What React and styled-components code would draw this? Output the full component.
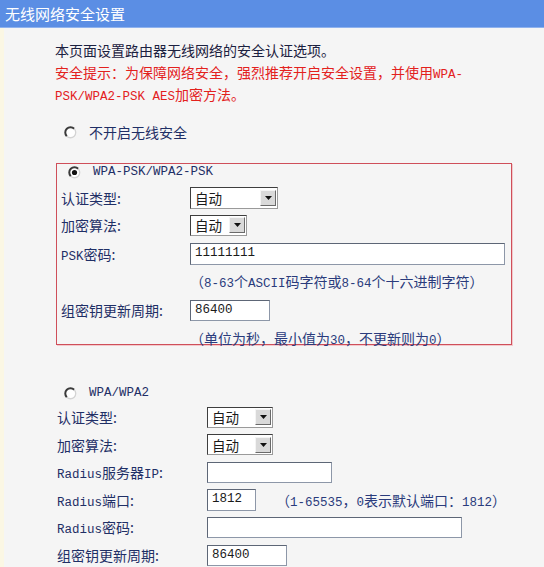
import React from "react";
import styled, { createGlobalStyle } from "styled-components";

// Global
const GlobalStyle = createGlobalStyle`
  html, body {
    margin: 0;
    padding: 0;
    background: #f5f5f5;
  }
  body {
    font-family: "Noto Sans CJK SC", "Liberation Sans", sans-serif;
    font-size: 14px;
  }
`;

// Styles
const Page = styled.div`
  width: 544px;
  height: 567px;
  overflow: hidden;
  background: #f5f5f5;
`;

const Header = styled.div`
  height: 27px;
  line-height: 27px;
  padding-left: 5px;
  background: #5b8ee4;
  border-bottom: 1px solid #8fb2ee;
  color: #ffffff;
  font-size: 15px;
`;

const Content = styled.div`
  padding: 11px 0 0 51px;
  border-left: 4px solid #fbf7e4;
  min-height: 540px;
`;

const Line = styled.div`
  height: 22px;
  line-height: 22px;
  color: ${(p) => (p.$warn ? "#e3211d" : "#1b2140")};
  white-space: nowrap;
`;

const Lat = styled.span`
  font-family: "Liberation Mono", monospace;
  font-size: 12.5px;
`;

const RadioRow = styled.label`
  display: flex;
  align-items: center;
  height: ${(p) => p.$h}px;
  margin-top: ${(p) => p.$top}px;
  padding-left: ${(p) => p.$indent}px;
  gap: 12px;
  color: #1f2f66;
`;

const Box = styled.div`
  width: 450px;
  margin-left: 1px;
  margin-top: 20px;
  padding-left: 4px;
  border: 1px solid #cf4f5a;
  box-shadow: 1px 1px 0 #f2c9cc;
`;

const Rows = styled.div`
  margin-top: ${(p) => p.$top || 0}px;
  margin-left: ${(p) => p.$left || 0}px;
`;

const Row = styled.div`
  display: grid;
  grid-template-columns: ${(p) => p.$label}px 1fr;
  align-items: center;
  height: ${(p) => p.$h}px;
  white-space: nowrap;
`;

const Label = styled.span`
  color: #1f2f66;
`;

const Field = styled.div`
  display: flex;
  align-items: center;
  gap: 20px;
`;

const Hint = styled.span`
  color: #2a3b7c;
`;

const Input = styled.div`
  box-sizing: border-box;
  width: ${(p) => p.$w}px;
  height: ${(p) => p.$ht || 21}px;
  padding-left: 4px;
  background: #ffffff;
  border: 1px solid #8d97a8;
  border-top-color: #5d6676;
  border-left-color: #5d6676;
  font-family: "Liberation Mono", monospace;
  font-size: 12.5px;
  line-height: 19px;
  color: #1a1a1a;
`;

const Select = styled.div`
  box-sizing: border-box;
  display: flex;
  align-items: center;
  justify-content: space-between;
  width: ${(p) => p.$w}px;
  height: ${(p) => p.$ht || 21}px;
  padding: 0 1px 0 4px;
  background: #ffffff;
  border: 1px solid #3e3e3e;
  border-right-color: #9a9a9a;
  border-bottom-color: #9a9a9a;
  font-size: 13.5px;
  color: #1b1b1b;
`;

const Arrow = styled.span`
  box-sizing: border-box;
  display: flex;
  align-items: center;
  justify-content: center;
  width: 16px;
  height: 16px;
  background: #d9d9d9;
  border: 1px solid #f4f4f4;
  border-right-color: #6a6a6a;
  border-bottom-color: #6a6a6a;
`;

const RadioMark = ({ checked }) => (
  <svg width="13" height="13" viewBox="0 0 13 13">
    <circle cx="6.5" cy="6.5" r="5.2" fill="#ffffff" />
    <path d="M10.2 2.8 A5.2 5.2 0 0 0 2.8 10.2" fill="none" stroke="#3a3a3a" strokeWidth="2" />
    <path d="M2.8 10.2 A5.2 5.2 0 0 0 10.2 2.8" fill="none" stroke="#d4d4d4" strokeWidth="1.3" />
    {checked && <circle cx="6.5" cy="6.5" r="2.6" fill="#111" />}
  </svg>
);

const DropDown = ({ w, ht }) => (
  <Select $w={w} $ht={ht}>
    <span>自动</span>
    <Arrow>
      <svg width="7" height="4" viewBox="0 0 7 4">
        <path d="M0 0 H7 L3.5 4 Z" fill="#111" />
      </svg>
    </Arrow>
  </Select>
);

const App = () => {
  return (
    <Page>
      <GlobalStyle />
      <Header>无线网络安全设置</Header>
      <Content>
        <Line>本页面设置路由器无线网络的安全认证选项。</Line>
        <Line $warn>
          安全提示：为保障网络安全，强烈推荐开启安全设置，并使用<Lat>WPA-</Lat>
        </Line>
        <Line $warn>
          <Lat>PSK/WPA2-PSK AES</Lat>加密方法。
        </Line>

        <RadioRow $h={22} $top={16} $indent={9}>
          <RadioMark />
          <span>不开启无线安全</span>
        </RadioRow>

        <Box>
          <RadioRow $h={16} $top={0} $indent={7}>
            <RadioMark checked />
            <Lat>WPA-PSK/WPA2-PSK</Lat>
          </RadioRow>
          <Rows $top={4}>
            <Row $label={129} $h={28}>
              <Label>认证类型:</Label>
              <DropDown w={88} ht={22} />
            </Row>
            <Row $label={129} $h={26}>
              <Label>加密算法:</Label>
              <DropDown w={57} />
            </Row>
            <Row $label={129} $h={32}>
              <Label>
                <Lat>PSK</Lat>密码:
              </Label>
              <Input $w={315} $ht={22}>11111111</Input>
            </Row>
            <Row $label={129} $h={22}>
              <span />
              <Hint>
                （<Lat>8-63</Lat>个<Lat>ASCII</Lat>码字符或<Lat>8-64</Lat>个十六进制字符）
              </Hint>
            </Row>
            <Row $label={129} $h={36}>
              <Label>组密钥更新周期:</Label>
              <Input $w={80}>86400</Input>
            </Row>
            <Row $label={129} $h={16}>
              <span />
              <Hint>
                （单位为秒，最小值为<Lat>30</Lat>，不更新则为<Lat>0</Lat>）
              </Hint>
            </Row>
          </Rows>
        </Box>

        <RadioRow $h={20} $top={38} $indent={9}>
          <RadioMark />
          <Lat>WPA/WPA2</Lat>
        </RadioRow>
        <Rows $left={2}>
          <Row $label={150} $h={28}>
            <Label>认证类型:</Label>
            <DropDown w={66} />
          </Row>
          <Row $label={150} $h={27}>
            <Label>加密算法:</Label>
            <DropDown w={66} />
          </Row>
          <Row $label={150} $h={28}>
            <Label>
              <Lat>Radius</Lat>服务器<Lat>IP</Lat>:
            </Label>
            <Input $w={125} />
          </Row>
          <Row $label={150} $h={27}>
            <Label>
              <Lat>Radius</Lat>端口:
            </Label>
            <Field>
              <Input $w={49} $ht={22}>1812</Input>
              <Hint>
                （<Lat>1-65535</Lat>，<Lat>0</Lat>表示默认端口：<Lat>1812</Lat>）
              </Hint>
            </Field>
          </Row>
          <Row $label={150} $h={28}>
            <Label>
              <Lat>Radius</Lat>密码:
            </Label>
            <Input $w={255} />
          </Row>
          <Row $label={150} $h={28}>
            <Label>组密钥更新周期:</Label>
            <Input $w={80}>86400</Input>
          </Row>
        </Rows>
      </Content>
    </Page>
  );
};

export default App;
